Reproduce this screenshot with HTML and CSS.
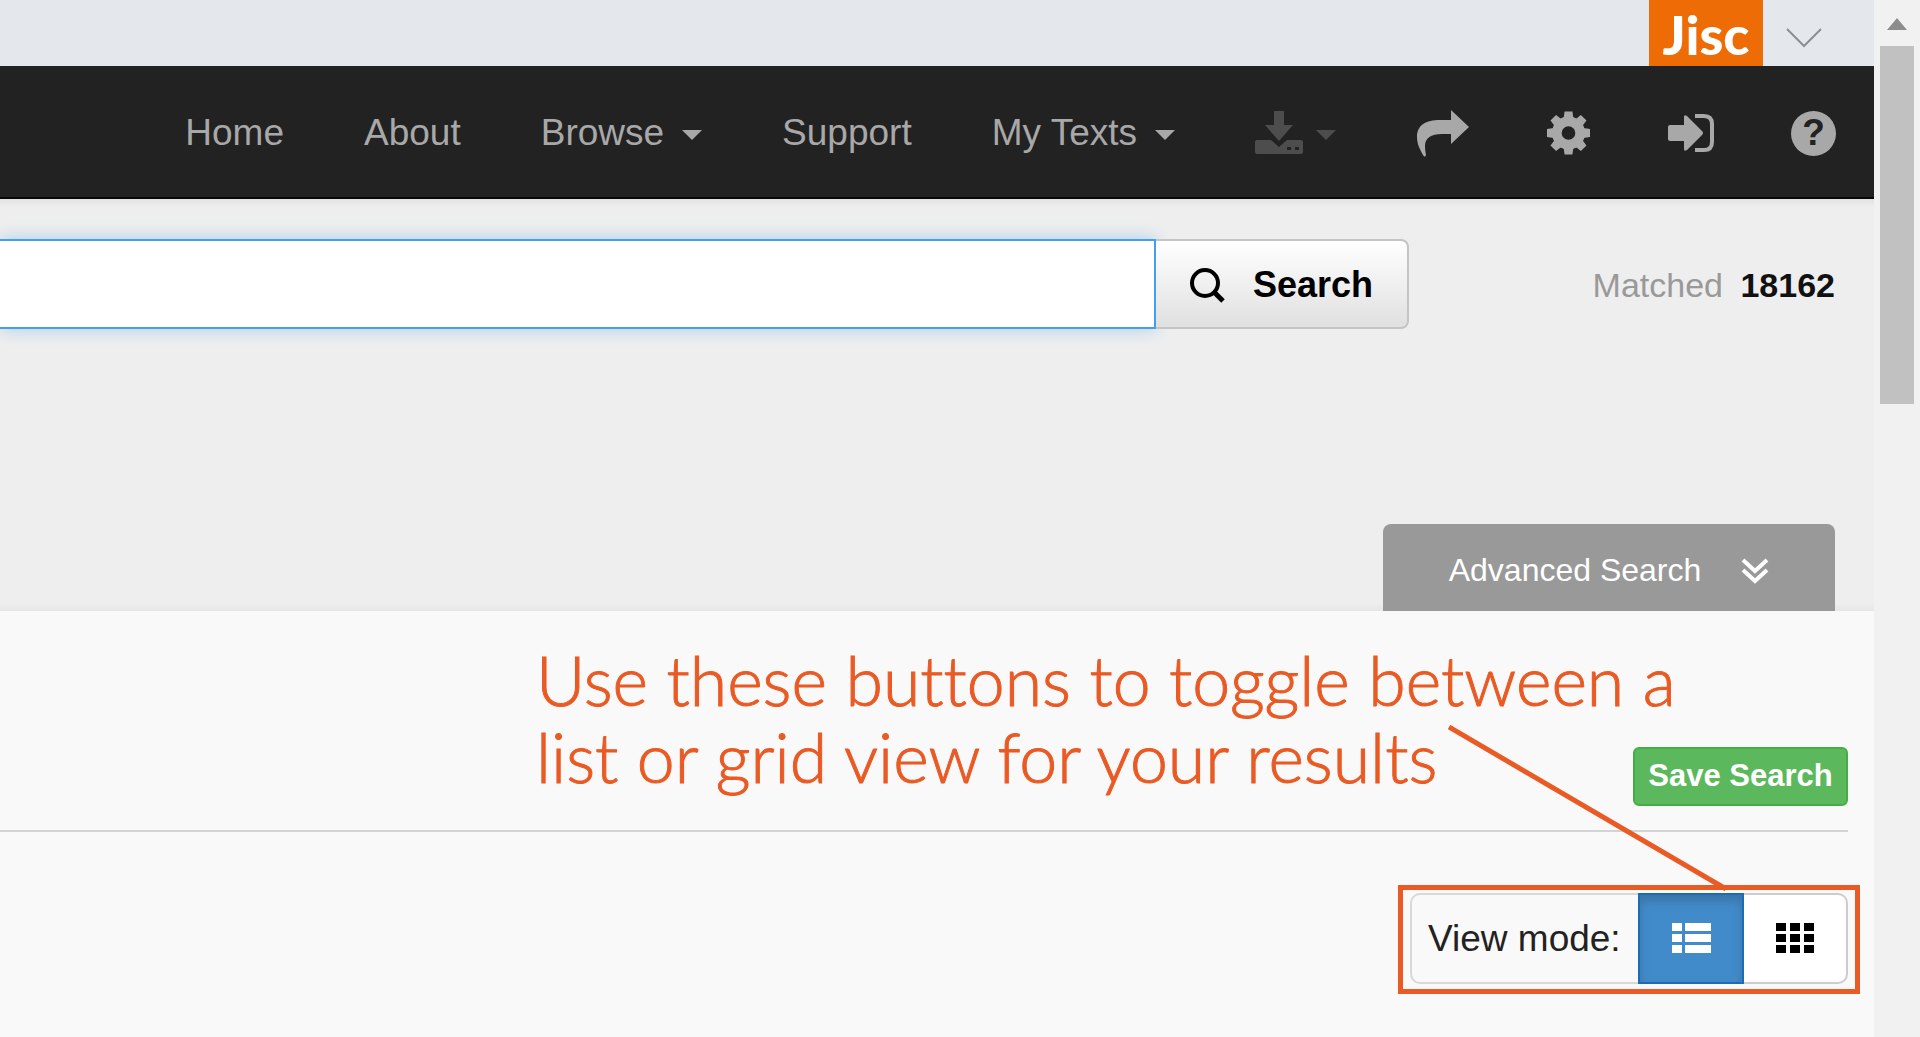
FILE: index.html
```html
<!DOCTYPE html>
<html lang="en">
<head>
<meta charset="utf-8">
<title>Search results</title>
<link rel="stylesheet" href="styles.css">
</head>
<body>
<div class="window">
  <div class="page">
    <header class="topbar">
      <a class="jisc" href="#">Jisc</a>
      <button class="topbar-toggle" type="button" aria-label="Show Jisc menu">
        <svg width="36" height="20" viewBox="0 0 36 20" fill="none" stroke="#8b8f94" stroke-width="2"><path d="M1 1 18 18 35 1"/></svg>
      </button>
    </header>

    <nav class="navbar">
      <div class="nav-links">
        <a href="#">Home</a>
        <a href="#">About</a>
        <a href="#">Browse <span class="caret"></span></a>
        <a href="#">Support</a>
        <a href="#">My Texts <span class="caret"></span></a>
        <a class="disabled" href="#" aria-label="Download">
          <svg width="48" height="44" viewBox="0 0 48 44" fill="currentColor"><path d="M19 0h10v14h9L24 30 10 14h9z"/><path fill-rule="evenodd" d="M2 29h14l8 7 8-7h14q2 0 2 2v10q0 2-2 2H2q-2 0-2-2V31q0-2 2-2zM32 36v3h4v-3zM40 36v3h4v-3z"/></svg>
          <span class="caret"></span>
        </a>
      </div>
      <div class="nav-icons">
        <a href="#" aria-label="Share">
          <svg width="53" height="48" viewBox="0 0 53 48" fill="currentColor"><path d="M35 1 53 18 35 35V25H26C15 25 9 29 9 37Q9 42 10 46Q9 49 7 46C3 39 1 34 1 28C1 16 10 11 24 11H35z"/></svg>
        </a>
        <a href="#" aria-label="Settings">
          <svg width="45" height="46" viewBox="-23 -23 46 46"><g fill="currentColor"><path fill-rule="evenodd" d="M0-17A17 17 0 1 1 0 17A17 17 0 1 1 0-17zM0-7A7 7 0 1 0 0 7A7 7 0 1 0 0-7z"/><path id="tooth" d="M-5-15-4-22H4L5-15z"/><use href="#tooth" transform="rotate(45)"/><use href="#tooth" transform="rotate(90)"/><use href="#tooth" transform="rotate(135)"/><use href="#tooth" transform="rotate(180)"/><use href="#tooth" transform="rotate(225)"/><use href="#tooth" transform="rotate(270)"/><use href="#tooth" transform="rotate(315)"/></g></svg>
        </a>
        <a href="#" aria-label="Log in">
          <svg width="46" height="40" viewBox="0 0 46 40"><path fill="currentColor" d="M0 14q0-2 2-2H16V4q0-3 3-1L34 18q2 2 0 4L19 37q-3 2-3-1V28H2q-2 0-2-2z"/><path fill="none" stroke="currentColor" stroke-width="4" d="M27 3h9q8 0 8 8v18q0 8-8 8h-9"/></svg>
        </a>
        <a class="help" href="#" aria-label="Help">?</a>
      </div>
    </nav>

    <section class="search-area">
      <form class="search-row">
        <input class="search-box" type="text" aria-label="Search terms">
        <button class="search-button" type="button">
          <svg width="36" height="36" viewBox="0 0 36 36" fill="none" stroke="#000" stroke-width="4"><circle cx="16" cy="16" r="13"/><path stroke-width="5" d="M25 25 34 34"/></svg>
          Search
        </button>
        <p class="matched">Matched <strong>18162</strong></p>
      </form>
      <button class="advanced" type="button">
        Advanced Search
        <svg width="28" height="26" viewBox="0 0 28 26" fill="none" stroke="#fff" stroke-width="4"><path d="M2 2 14 13 26 2M2 12 14 23 26 12"/></svg>
      </button>
    </section>

    <main class="results">
      <div class="save-row"><button class="save" type="button">Save Search</button></div>
      <div class="view-row">
        <div class="view-mode" role="group" aria-label="View mode">
          <span class="view-label">View mode:</span>
          <button class="view-button active" type="button" aria-label="List view">
            <svg width="40" height="30" viewBox="0 0 40 30" fill="#fff"><path d="M1 0h10v8H1zM14 0h26v8H14zM1 11h10v8H1zM14 11h26v8H14zM1 22h10v8H1zM14 22h26v8H14z"/></svg>
          </button>
          <button class="view-button" type="button" aria-label="Grid view">
            <svg width="38" height="30" viewBox="0 0 38 30" fill="#000"><path d="M0 0h10v8H0zM14 0h10v8H14zM28 0h10v8H28zM0 11h10v8H0zM14 11h10v8H14zM28 11h10v8H28zM0 22h10v8H0zM14 22h10v8H14zM28 22h10v8H28z"/></svg>
          </button>
        </div>
      </div>
      <p class="note">Use these buttons to toggle between a<br>list or grid view for your results</p>
      <svg class="pointer" width="280" height="166" viewBox="0 0 280 166"><path d="M1 2 278 164" stroke="#e95a24" stroke-width="5"/></svg>
    </main>
  </div>

  <div class="scrollbar" aria-hidden="true">
    <svg width="20" height="12" viewBox="0 0 20 12"><path fill="#8c8c8c" d="M0 12 10 0 20 12z"/></svg>
    <div class="thumb"></div>
  </div>
</div>
</body>
</html>
```
FILE: styles.css
```css
* { box-sizing: border-box; }

body {
  margin: 0;
  background: #f9f9f9;
  color: #222;
  font-family: "Liberation Sans", Arial, sans-serif;
  font-size: 37px;
}

a { color: inherit; text-decoration: none; }
p { margin: 0; }
svg { display: block; flex: none; }
button { font: inherit; border: 0; cursor: pointer; }

.window { display: flex; min-height: 100vh; }
.page { flex: 1; min-width: 0; display: flex; flex-direction: column; }

/* Jisc strip */
.topbar {
  display: flex;
  justify-content: flex-end;
  gap: 23px;
  height: 66px;
  padding-right: 52px;
  background: #e4e8ed;
}
.jisc {
  display: flex;
  justify-content: center;
  width: 114px;
  background: #ee6c06;
  color: #fff;
  font: 900 54px/70px Lato, sans-serif;
}
.topbar-toggle { padding: 10px 0 0; background: none; }

/* Main navigation */
.navbar {
  display: flex;
  justify-content: flex-end;
  align-items: center;
  gap: 80px;
  height: 133px;
  padding: 3px 38px 0 0;
  background: #222;
  border-bottom: 2px solid #080808;
  color: #a8a8a8;
  white-space: nowrap;
}
.nav-links, .nav-icons { display: flex; align-items: center; }
.nav-links { gap: 80px; }
.nav-icons { gap: 77px; }
.navbar a { display: flex; align-items: center; gap: 18px; }
.navbar .disabled { color: #4d4d4d; gap: 13px; }
.caret {
  margin-top: 4px;
  border: 10px solid transparent;
  border-top-color: currentColor;
  border-bottom: 0;
}
.navbar .help {
  justify-content: center;
  width: 45px;
  height: 45px;
  border-radius: 50%;
  background: #a8a8a8;
  color: #222;
  font-weight: bold;
}

/* Search */
.search-area {
  display: flex;
  flex-direction: column;
  align-items: flex-end;
  justify-content: space-between;
  height: 412px;
  padding: 40px 39px 0 0;
  background: linear-gradient(#e2e2e2, #eee 8px, #eee 404px, #e6e6e6);
}
.search-row { display: flex; align-items: center; width: 100%; }
.search-box {
  flex: 1;
  min-width: 0;
  height: 90px;
  padding: 0 24px;
  border: 2px solid #459fe9;
  border-left: 0;
  outline: 0;
  background: #fff;
  box-shadow: 0 0 16px #a9cdec;
  font: inherit;
}
.search-button {
  display: flex;
  align-items: center;
  gap: 28px;
  width: 253px;
  height: 90px;
  padding: 2px 0 0 33px;
  border: 2px solid #c4c4c4;
  border-left: 0;
  border-radius: 0 8px 8px 0;
  background: linear-gradient(#fff, #e0e0e0);
  color: #000;
  font-size: 36px;
  font-weight: bold;
  z-index: 1;
}
.matched {
  width: 426px;
  padding-top: 2px;
  color: #999;
  font-size: 34px;
  text-align: right;
}
.matched strong { margin-left: 8px; color: #111; }
.advanced {
  display: flex;
  align-items: center;
  justify-content: center;
  gap: 40px;
  width: 452px;
  height: 87px;
  padding: 6px 0 0;
  border-radius: 8px 8px 0 0;
  background: #999;
  color: #fff;
  font-size: 32px;
}

/* Results */
.results {
  position: relative;
  flex: 1;
  padding: 136px 26px 54px 0;
  background: #f9f9f9;
}
.save-row {
  display: flex;
  justify-content: flex-end;
  padding-bottom: 24px;
  border-bottom: 2px solid #d4d4d4;
}
.save {
  width: 215px;
  height: 59px;
  padding: 0 0 2px;
  border: 2px solid #45ad45;
  border-radius: 6px;
  background: #5cb85c;
  color: #fff;
  font-size: 31px;
  font-weight: bold;
}
.view-row { display: flex; justify-content: flex-end; padding-top: 61px; }
.view-mode {
  position: relative;
  display: flex;
  width: 438px;
  height: 91px;
}
.view-mode::after {
  content: "";
  position: absolute;
  inset: -8px -12px -10px;
  border: 5px solid #e95a24;
  pointer-events: none;
}
.view-label {
  flex: 1;
  padding-left: 16px;
  border: 2px solid #d8d8d8;
  border-right: 0;
  border-radius: 10px 0 0 10px;
  line-height: 88px;
}
.view-button {
  display: flex;
  align-items: center;
  justify-content: center;
  width: 104px;
  padding: 0 0 2px;
  border: 2px solid #ccc;
  border-left: 0;
  border-radius: 0 10px 10px 0;
  background: #fff;
}
.view-button.active {
  width: 106px;
  border: 2px solid #1c6cb5;
  border-radius: 0;
  background: #428bca;
  box-shadow: inset 0 6px 10px #3a74a6;
}

/* Help annotation laid over the results */
.note {
  position: absolute;
  top: 30px;
  right: 188px;
  width: 1150px;
  color: #e95a24;
  font: 300 68px/77px Lato, sans-serif;
  font-variant-ligatures: none;
  -webkit-text-stroke: 1px #e95a24;
  white-space: nowrap;
}
.pointer { position: absolute; top: 114px; right: 146px; }

/* Window scrollbar */
.scrollbar {
  display: flex;
  flex-direction: column;
  align-items: center;
  gap: 16px;
  width: 46px;
  padding-top: 18px;
  background: #f1f1f1;
}
.thumb { width: 34px; height: 358px; background: #c1c1c1; }
```
